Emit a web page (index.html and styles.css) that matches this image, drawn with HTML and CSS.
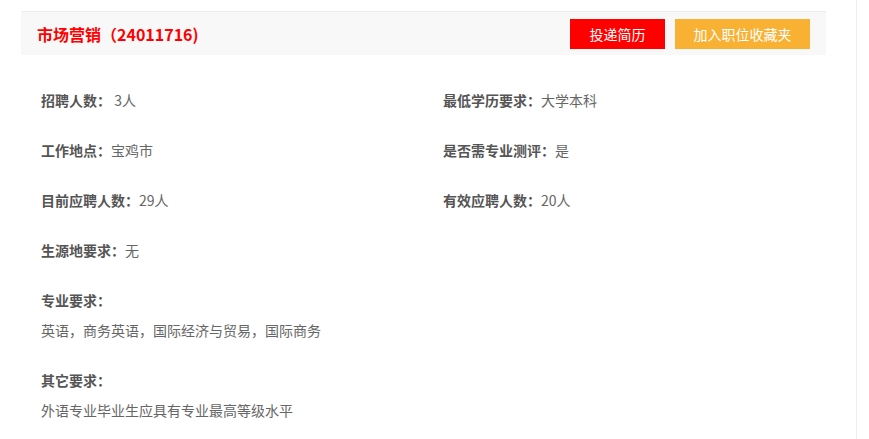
FILE: index.html
```html
<!DOCTYPE html>
<html lang="zh-CN">
<head>
  <meta charset="UTF-8">
  <title>市场营销</title>
  <link rel="stylesheet" href="styles.css">
</head>
<body>

<div class="page">
  <div class="job-head">
    <h1>市场营销（24011716)</h1>
    <div class="actions">
      <button class="red">投递简历</button>
      <button class="orange">加入职位收藏夹</button>
    </div>
  </div>

  <div class="job-info">
    <div class="item"><b>招聘人数：</b> 3人</div>
    <div class="item"><b>最低学历要求：</b>大学本科</div>
    <div class="item"><b>工作地点：</b>宝鸡市</div>
    <div class="item"><b>是否需专业测评：</b>是</div>
    <div class="item"><b>目前应聘人数：</b>29人</div>
    <div class="item"><b>有效应聘人数：</b>20人</div>
    <div class="item"><b>生源地要求：</b>无</div>
  </div>

  <div class="req">
    <b>专业要求：</b>
    <p>英语，商务英语，国际经济与贸易，国际商务</p>
  </div>
  <div class="req">
    <b>其它要求：</b>
    <p>外语专业毕业生应具有专业最高等级水平</p>
  </div>
</div>

</body>
</html>
```

FILE: styles.css
```css
* {
  box-sizing: border-box;
}
body {
  margin: 0;
  font-family: "Noto Sans CJK SC", "Liberation Sans", sans-serif;
  font-size: 14px;
  color: #666;
  background: #fff;
}
.page {
  width: 857px;
  min-height: 439px;
  border-right: 1px solid #eee;
  padding: 11px 30px 0 21px;
}
.job-head {
  display: flex;
  align-items: center;
  justify-content: space-between;
  height: 44px;
  background: #f8f8f8;
  border-top: 1px solid #ececec;
  padding: 0 16px;
}
.job-head h1 {
  margin: 0;
  font-size: 16px;
  font-weight: bold;
  color: #f00;
}
.actions {
  display: flex;
  gap: 10px;
}
.actions button {
  height: 30px;
  border: none;
  color: #fff;
  font-family: inherit;
  font-size: 14px;
  padding: 0;
  cursor: pointer;
}
.red {
  background: #f00;
  width: 95px;
}
.orange {
  background: #f8b133;
  width: 135px;
}
.job-info {
  display: grid;
  grid-template-columns: 402px 1fr;
  padding: 20px 0 0 20px;
}
.item {
  line-height: 50px;
}
.item b, .req b {
  color: #555;
  font-weight: bold;
}
.req {
  padding-left: 20px;
  margin: 10px 0 20px;
  line-height: 30px;
}
.req p {
  margin: 0;
}
```
